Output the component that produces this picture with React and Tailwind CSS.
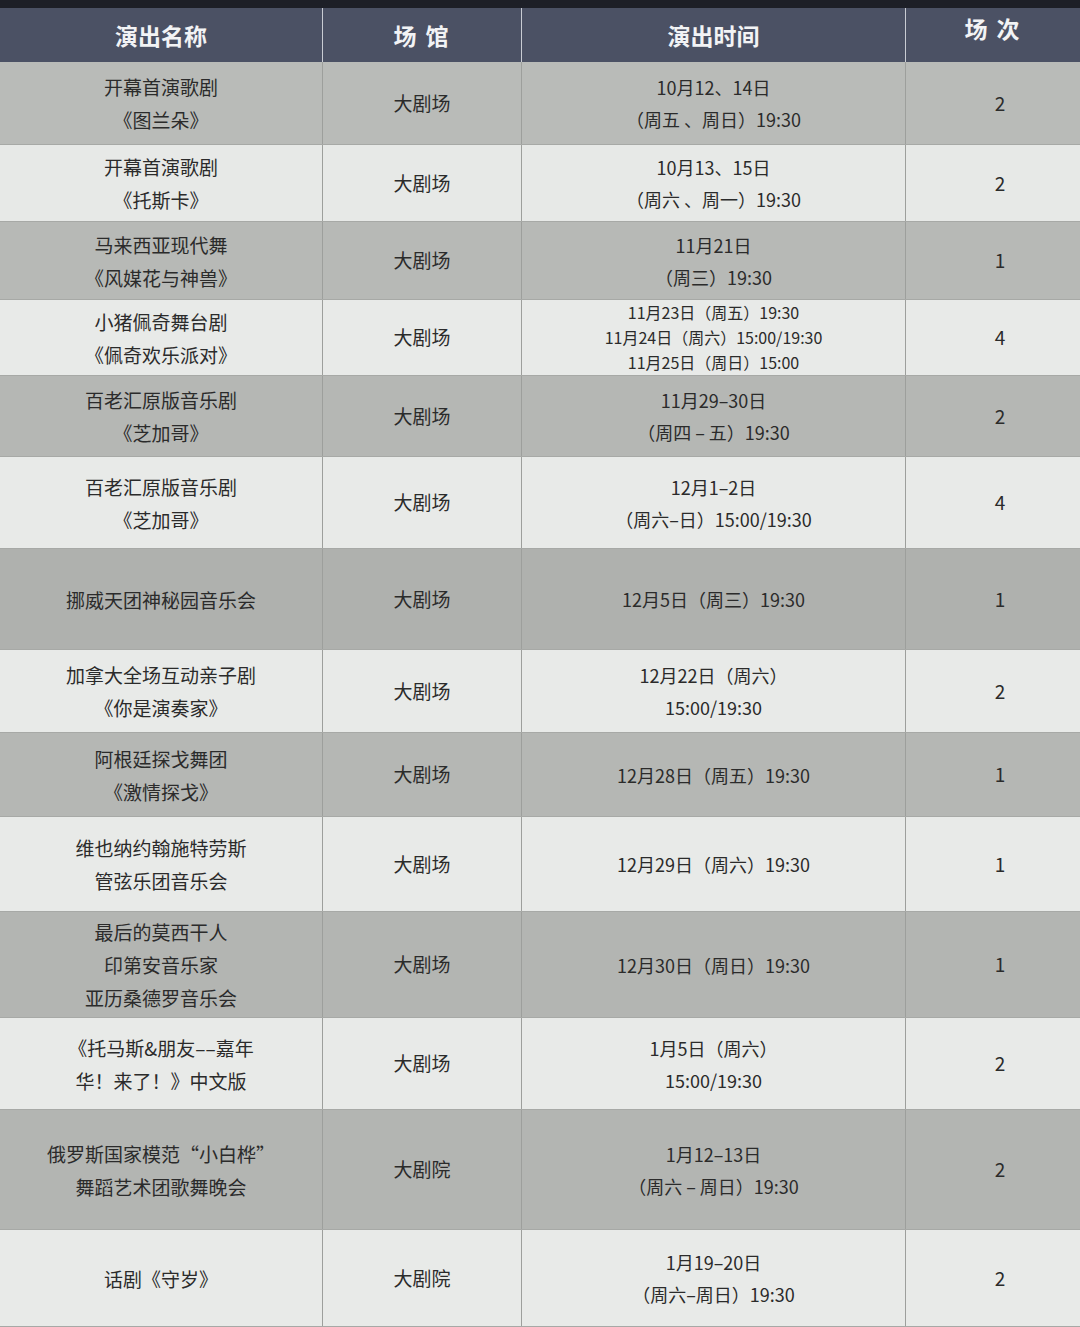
import React from 'react'

const rows = [
  { h: 'h-[83px]', bg: 'bg-[#b9bbb8]', name: ['开幕首演歌剧', '《图兰朵》'], venue: '大剧场', time: ['10月12、14日', '（周五 、周日）19:30'], n: '2' },
  { h: 'h-[77px]', bg: 'bg-[#e7e9e7]', name: ['开幕首演歌剧', '《托斯卡》'], venue: '大剧场', time: ['10月13、15日', '（周六 、周一）19:30'], n: '2' },
  { h: 'h-[78px]', bg: 'bg-[#b7b9b6]', name: ['马来西亚现代舞', '《风媒花与神兽》'], venue: '大剧场', time: ['11月21日', '（周三）19:30'], n: '1' },
  { h: 'h-[76px]', bg: 'bg-[#e8eae8]', name: ['小猪佩奇舞台剧', '《佩奇欢乐派对》'], venue: '大剧场', time: ['11月23日（周五）19:30', '11月24日（周六）15:00/19:30', '11月25日（周日）15:00'], n: '4', small: true },
  { h: 'h-[81px]', bg: 'bg-[#b5b7b4]', name: ['百老汇原版音乐剧', '《芝加哥》'], venue: '大剧场', time: ['11月29–30日', '（周四 – 五）19:30'], n: '2' },
  { h: 'h-[92px]', bg: 'bg-[#e8eae8]', name: ['百老汇原版音乐剧', '《芝加哥》'], venue: '大剧场', time: ['12月1–2日', '（周六–日）15:00/19:30'], n: '4' },
  { h: 'h-[101px]', bg: 'bg-[#afb1ae]', name: ['挪威天团神秘园音乐会'], venue: '大剧场', time: ['12月5日（周三）19:30'], n: '1' },
  { h: 'h-[83px]', bg: 'bg-[#e8eae8]', name: ['加拿大全场互动亲子剧', '《你是演奏家》'], venue: '大剧场', time: ['12月22日（周六）', '15:00/19:30'], n: '2' },
  { h: 'h-[84px]', bg: 'bg-[#b5b7b4]', name: ['阿根廷探戈舞团', '《激情探戈》'], venue: '大剧场', time: ['12月28日（周五）19:30'], n: '1' },
  { h: 'h-[95px]', bg: 'bg-[#e8eae8]', name: ['维也纳约翰施特劳斯', '管弦乐团音乐会'], venue: '大剧场', time: ['12月29日（周六）19:30'], n: '1' },
  { h: 'h-[106px]', bg: 'bg-[#b3b5b2]', name: ['最后的莫西干人', '印第安音乐家', '亚历桑德罗音乐会'], venue: '大剧场', time: ['12月30日（周日）19:30'], n: '1' },
  { h: 'h-[92px]', bg: 'bg-[#e8eae8]', name: ['《托马斯&朋友––嘉年', '华！来了！》中文版'], venue: '大剧场', time: ['1月5日（周六）', '15:00/19:30'], n: '2' },
  { h: 'h-[120px]', bg: 'bg-[#b3b5b2]', name: ['俄罗斯国家模范“小白桦”', '舞蹈艺术团歌舞晚会'], venue: '大剧院', time: ['1月12–13日', '（周六 – 周日）19:30'], n: '2' },
  { h: 'h-[97px]', bg: 'bg-[#e8eae8]', name: ['话剧《守岁》'], venue: '大剧院', time: ['1月19–20日', '（周六–周日）19:30'], n: '2' },
]

const cell = 'flex flex-col items-center justify-center text-center border-r border-[#9d9f9c]'

const App = () => {
  return (
    <div className="w-[1080px] h-[1327px] overflow-hidden bg-[#e8eae8] text-[#2b2b2b]" style={{ fontFamily: '"Noto Sans CJK SC", "Noto Sans", sans-serif' }}>
      <div className="h-[8px] bg-[#1d1f27]"></div>
      {/* header */}
      <div className="flex h-[54px] bg-[#4b5164] text-[#f2f3f5] font-bold text-[23px]">
        <div className="w-[323px] flex items-center justify-center border-r border-[#c9ccd3]">演出名称</div>
        <div className="w-[199px] flex items-center justify-center border-r border-[#c9ccd3] tracking-[2px]">场 馆</div>
        <div className="w-[384px] flex items-center justify-center border-r border-[#c9ccd3]">演出时间</div>
        <div className="flex-1 flex items-center justify-center pb-[14px] tracking-[2px]">场 次</div>
      </div>

      {rows.map((r, i) => (
        <div key={i} className={`flex ${r.h} ${r.bg} border-b border-[#a7a9a6]`}>
          <div className={`${cell} w-[323px] text-[19px] leading-[33px]`}>
            {r.name.map((t, j) => <div key={j}>{t}</div>)}
          </div>
          <div className={`${cell} w-[199px] text-[19px]`}>{r.venue}</div>
          <div className={`${cell} w-[384px] ${r.small ? 'text-[16px] leading-[25px]' : 'text-[18px] leading-[32px]'}`}>
            {r.time.map((t, j) => <div key={j}>{t}</div>)}
          </div>
          <div className="flex-1 flex items-center justify-center text-[19px] pl-[14px]">{r.n}</div>
        </div>
      ))}
    </div>
  )
}

export default App
